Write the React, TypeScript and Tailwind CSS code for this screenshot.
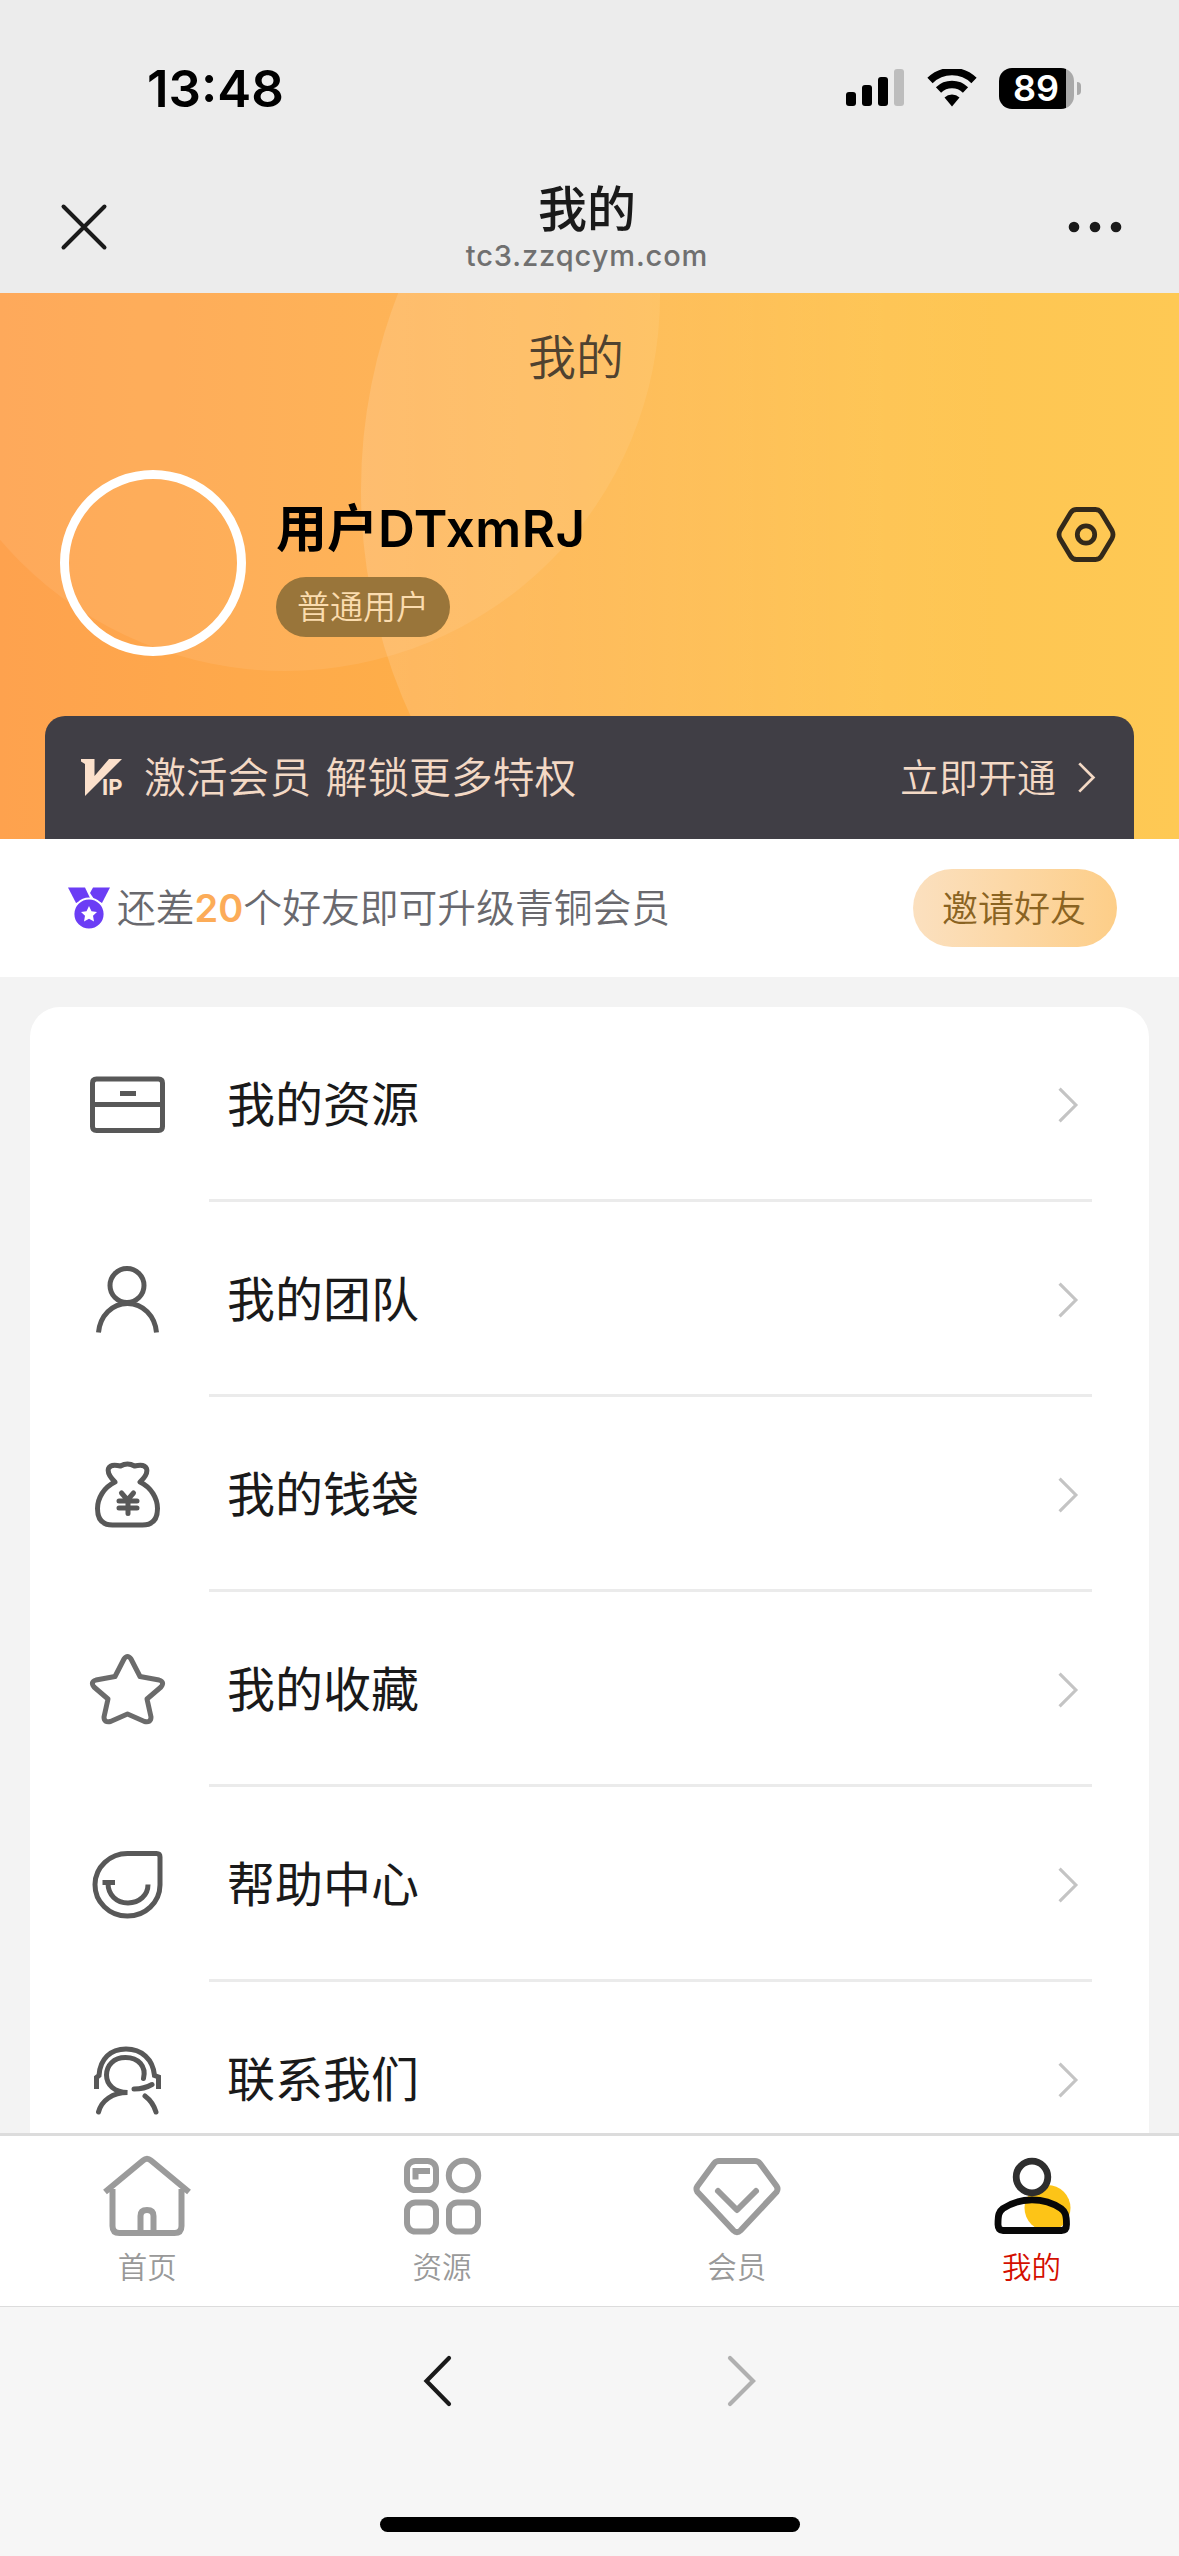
import React, { ReactNode, useState } from "react";

type IconProps = { className?: string };

const StatusBar = () => (
    <div className="flex h-[176px] items-center justify-between pl-[147px] pr-[98px]">
        <span className="font-['Inter'] text-[51px] font-semibold leading-none text-black">13:48</span>
        <div className="flex items-center">
            <svg className="mr-[23px] h-[38px] w-[58px]" viewBox="0 0 58 38">
                <rect x="0" y="23" width="10" height="14" rx="3" />
                <rect x="16" y="16" width="10" height="21" rx="3" />
                <rect x="32" y="8" width="10" height="29" rx="3" />
                <rect x="48" y="0" width="10" height="37" rx="3" fill="#bdbdbd" />
            </svg>
            <svg className="mr-[22px] h-[38px] w-[50px]" viewBox="0 0 50 38">
                <path d="M3 11.5a31.5 31.5 0 0 1 44 0" fill="none" stroke="#000" strokeWidth="7.5" />
                <path d="M11.5 21a19.5 19.5 0 0 1 27 0" fill="none" stroke="#000" strokeWidth="7.5" />
                <path d="M17.5 28.5a11 11 0 0 1 15 0L25 37.5Z" />
            </svg>
            <div className="flex h-[41px] w-[75px] items-center rounded-[13px] bg-[linear-gradient(90deg,#000_67px,#a9a9a9_67px)] pl-[14px]">
                <span className="font-['Inter'] text-[36px] font-semibold leading-none text-white">89</span>
            </div>
            <div className="ml-[3px] h-[13px] w-[4px] rounded-r-full bg-[#a9a9a9]" />
        </div>
    </div>
);

const BrowserHeader = () => (
    <div className="flex h-[117px] items-start justify-between pl-[60px] pr-[57px]">
        <svg className="mt-[27px] size-[48px]" viewBox="0 0 48 48" fill="none" stroke="#1a1a1a" strokeWidth="4" strokeLinecap="round">
            <path d="M3.5 3.5l41 41M44.5 3.5l-41 41" />
        </svg>
        <div className="flex flex-col items-center pr-[2px]">
            <h1 className="h-[66px] text-[49px] font-medium leading-[60px] text-[#1a1a1a]">我的</h1>
            <p className="font-['Inter'] text-[29px] font-[450] leading-[28px] tracking-[0.9px] text-[#707070]">tc3.zzqcym.com</p>
        </div>
        <svg className="mt-[44px] h-[14px] w-[54px]" viewBox="0 0 54 14" fill="#1a1a1a">
            <circle cx="6" cy="7" r="5.3" />
            <circle cx="27" cy="7" r="5.3" />
            <circle cx="48" cy="7" r="5.3" />
        </svg>
    </div>
);

// Decorative translucent circles behind the profile block
const HeroBackground = () => (
    <svg className="absolute inset-0 h-full w-full" viewBox="0 0 1179 546">
        <defs>
            <linearGradient id="base" x1="0" y1="0" x2="1" y2="0">
                <stop offset="0" stopColor="#fea24e" />
                <stop offset="0.35" stopColor="#feae49" />
                <stop offset="0.75" stopColor="#fec452" />
                <stop offset="1" stopColor="#fec954" />
            </linearGradient>
            <linearGradient id="right" gradientUnits="userSpaceOnUse" x1="361" y1="0" x2="1000" y2="0">
                <stop offset="0" stopColor="#fff" stopOpacity="0.14" />
                <stop offset="1" stopColor="#fff" stopOpacity="0" />
            </linearGradient>
        </defs>
        <rect width="1179" height="546" fill="url(#base)" />
        <circle cx="285" cy="3" r="375" fill="#fff" fillOpacity="0.08" />
        <circle cx="901" cy="197" r="540" fill="url(#right)" />
    </svg>
);

const Vip = () => (
    <div className="relative h-[40px] w-[44px]">
        <svg className="h-[40px] w-[44px]" viewBox="0 0 44 40" fill="#fbe0cb">
            <path d="M0 1h13.5v17L28 1h13L4 38V6L0 3.5Z" />
        </svg>
        <span className="absolute left-[21px] top-[18px] font-['Inter'] text-[22px] font-bold leading-[23px] text-[#fbe0cb]">IP</span>
    </div>
);

const Medal = () => (
    <svg className="h-[43px] w-[42px]" viewBox="0 0 42 43" fill="#6b3df5">
        <path d="M0 0.5h17L22 11 8 16Z" />
        <path d="M25 0.5h17L34 16 26 12l-4-6Z" />
        <circle cx="21" cy="27" r="15.5" stroke="#fff" strokeWidth="1.8" />
        <path d="M21 19l2.5 5.2 5.5.7-4 3.9 1 5.7-5-2.700-5 2.700 1-5.700-4-3.900 5.500-.7Z" fill="#fff" />
    </svg>
);

const Chevron = ({ className }: IconProps) => (
    <svg className={className} viewBox="0 0 20 34" fill="none" stroke="currentColor" strokeWidth="3">
        <path d="M1.5 1.5L17 17 1.5 32.5" />
    </svg>
);

const Hero = () => (
    <section className="relative h-[546px] overflow-hidden">
        <HeroBackground />
        <div className="relative flex h-full flex-col">
            <h2 className="h-[128px] pr-[27px] text-center text-[48px] font-[350] leading-[122px] text-[#4f4230]">我的</h2>
            <div className="mt-[49px] flex h-[186px] pl-[60px] pr-[63px]">
                <div className="size-[186px] rounded-full border-[9px] border-white" />
                <div className="ml-[30px] flex grow flex-col items-start pt-[24px]">
                    <p className="font-['Inter','Noto_Sans_CJK_SC'] text-[51px] font-semibold leading-[70px] text-black">
                        用户<span className="tracking-[0.5px]">DTxmRJ</span>
                    </p>
                    <span className="mt-[13px] h-[60px] rounded-full bg-[#99753a] px-[21px] text-[33px] font-[350] leading-[57px] text-[#fbdcae]">普通用户</span>
                </div>
                <svg className="mt-[35px] h-[58px] w-[60px]" viewBox="0 0 60 58" fill="none" stroke="#33291a" strokeWidth="4.8">
                    <path d="M20.5 4.5h19q4 0 6 3.5l10.5 17.5q2 4 0 8L45.5 51q-2 3.500-6 3.500h-19q-4 0-6-3.500L4 33.500q-2-4 0-8L14.500 8q2-3.500 6-3.500Z" />
                    <circle cx="30" cy="29.5" r="8.7" />
                </svg>
            </div>
            <div className="mx-[45px] mt-auto flex h-[123px] items-center rounded-t-[20px] bg-[#403e45] pl-[36px] pr-[37px] text-[#f3d9c5]">
                <Vip />
                <span className="ml-[19px] grow pb-[4px] text-[41.8px] font-[350] [word-spacing:5px]">激活会员 解锁更多特权</span>
                <span className="pb-[4px] text-[39px] font-[350]">立即开通</span>
                <Chevron className="ml-[21px] h-[31px] w-[20px]" />
            </div>
        </div>
    </section>
);

const UpgradeTip = () => (
    <section className="flex h-[138px] items-center bg-white pl-[68px] pr-[62px]">
        <Medal />
        <p className="ml-[7px] grow pb-[3px] text-[38.8px] font-[350] text-[#69696e]">
            还差<b className="font-['Inter'] text-[38px] font-semibold text-[#fcac58]">20</b>个好友即可升级青铜会员
        </p>
        <button className="h-[78px] w-[204px] rounded-full bg-linear-to-r from-[#fbe0bf] to-[#fdce88] pb-[5px] pr-[2px] text-[36px] font-[350] text-[#8a6322]">邀请好友</button>
    </section>
);

const MenuIcon = ({ children }: { children: ReactNode }) => (
    <svg className="h-[80px] w-[80px] shrink-0" viewBox="0 0 80 80" fill="none" stroke="#585858" strokeWidth="5">
        {children}
    </svg>
);

const menu = [
    {
        title: "我的资源",
        icon: <path d="M9.5 14h62q4 0 4 4v43.5q0 4-4 4h-62q-4 0-4-4V18q0-4 4-4ZM5.5 39.5h70M33 28.5h16" />,
    },
    {
        title: "我的团队",
        icon: (
            <>
                <circle cx="40" cy="25.5" r="17" />
                <path d="M11.5 72.5C13 56 25 43.5 40.5 43.5s27.5 12.5 29 29" />
            </>
        ),
    },
    {
        title: "我的钱袋",
        icon: (
            <>
                <path strokeLinejoin="round" d="M28 27C22.5 21.500 20.500 16.500 21.500 13.500q2-5 12-2.500 7-4 14 0 10-2.500 12 2.500c1 3-.5 8-6.500 13.500C64.500 32.500 70.500 43.500 70.500 53.500q0 16.500-15 16.500h-30q-15 0-15-16.500c0-10 6-21 17.500-26.500Z" />
                <path strokeLinecap="round" d="M34.5 38l6 7 6-7M32 46h18M32 53h18M41 46v12.500" />
            </>
        ),
    },
    {
        title: "我的收藏",
        icon: (
            <path strokeLinejoin="round" stroke="#6b6b6b" d="M37 9q3.500-5 7 0L53 26.500l19 3.500q6 2 2 7L60 49l4 18q0 6-6.500 4.500l-17-7.500-17 7.500q-6.500 1.500-6.500-4.500l4-18L7 37q-4-5 2-7L28 26.500Z" />
        ),
    },
    {
        title: "帮助中心",
        icon: (
            <>
                <path d="M41 8.500h28.500q3.500 0 3.500 3.500v28A32.500 31.300 0 1 1 41 8.500Z" />
                <path d="M15.500 37.500H28M21 38c0 12 8.500 20 20 20s20-8 20-18.500" />
            </>
        ),
    },
    {
        title: "联系我们",
        icon: (
            <>
                <path d="M9.500 49V37.500l2.500-2C13 19 23.500 9 39 9S66 19 67.500 35.500l4 1.500v12" />
                <path strokeLinecap="round" d="M56.500 38.500c3-12-5-21-18-21-12 0-19 8-19 17.500 0 10 8 17 21 17.500-15 0-26 8-29 19.500M47 49c8 0 12-1 18-4.500M58 56q8 6 11 16" />
            </>
        ),
    },
];

const Menu = () => (
    <section className="mx-[30px] mt-[30px] h-[1126px] overflow-hidden rounded-t-[30px] bg-white">
        {menu.map((item) => (
            <div key={item.title} className="flex h-[195px] items-center pl-[57px]">
                <MenuIcon>{item.icon}</MenuIcon>
                <div className="ml-[42px] mr-[57px] flex h-full grow items-center justify-between border-b-[3px] border-[#ebebeb] pl-[18px] pr-[13px] pt-[3px]">
                    <span className="pb-[8px] text-[48px] leading-none text-[#1a1a1a]">{item.title}</span>
                    <Chevron className="h-[36px] w-[21px] text-[#c4c4c4]" />
                </div>
            </div>
        ))}
    </section>
);

const tabs = [
    {
        title: "首页",
        icon: (
            <>
                <path strokeLinejoin="round" d="M3 38L41 6.500q4-3.500 8 0L87 38M10.500 35v37q0 7 7 7h55q7 0 7-7V35" />
                <path d="M38.500 79V62q0-6 6.500-6t6.500 6v17" />
            </>
        ),
    },
    {
        title: "资源",
        icon: (
            <>
                <rect x="10" y="7" width="29" height="29" rx="8.5" />
                <circle cx="66.5" cy="21.5" r="14.7" />
                <rect x="10" y="48.5" width="29" height="29" rx="8.5" />
                <rect x="52" y="48.5" width="29" height="29" rx="8.5" />
                <path d="M15.500 17H33M18.500 17v8.500" />
            </>
        ),
    },
    {
        title: "会员",
        icon: (
            <>
                <path strokeLinejoin="round" d="M27 7h36q3 0 5 2.500L84.500 32q2 3 0 6L48.500 76.500q-3.500 3.500-7 0L5.500 38q-2-3 0-6L22 9.500Q24 7 27 7Z" />
                <path strokeLinecap="round" strokeLinejoin="round" d="M26 37l19 19 19-19" />
            </>
        ),
    },
    {
        title: "我的",
        icon: (
            <>
                <circle cx="60.5" cy="54" r="23" fill="#fdc417" stroke="none" />
                <circle cx="45" cy="23" r="15.8" stroke="#2e2e2e" strokeWidth="6.8" fill="#fff" />
                <path strokeLinejoin="round" stroke="#080808" strokeWidth="6.8" d="M11 70.500c0-10 1-13 5-16 17-11.500 41-11.500 58 0 4 3 5.500 6 5.500 16q0 6-5 6H16q-5 0-5-6Z" />
            </>
        ),
    },
];

const TabBar = ({ active, onChange }: { active: number; onChange: (i: number) => void }) => (
    <nav className="grid h-[174px] grid-cols-4 border-b border-t-[3px] border-b-[#dcdcdc] border-t-[#dcdcdc] bg-white">
        {tabs.map((tab, i) => (
            <button key={tab.title} className="flex flex-col items-center pt-[18px]" onClick={() => onChange(i)}>
                <svg className="h-[84px] w-[90px]" viewBox="0 0 90 84" fill="none" stroke="#9b9b9b" strokeWidth="6">
                    {tab.icon}
                </svg>
                <span className={i === active ? "mt-[9px] text-[29.5px] font-[350] leading-[36px] text-[#d40f00]" : "mt-[9px] text-[29.5px] font-[350] leading-[36px] text-[#999]"}>
                    {tab.title}
                </span>
            </button>
        ))}
    </nav>
);

const BrowserFooter = () => (
    <footer className="flex h-[249px] flex-col items-center bg-[#f6f6f6]">
        <div className="mt-[47px] flex gap-[274px]">
            <svg className="h-[54px] w-[30px]" viewBox="0 0 30 54" fill="none" stroke="#1a1a1a" strokeWidth="4.2" strokeLinecap="round">
                <path d="M26 4L3.500 27 26 50" />
            </svg>
            <svg className="h-[54px] w-[30px]" viewBox="0 0 30 54" fill="none" stroke="#b0b0b0" strokeWidth="4.2" strokeLinecap="round">
                <path d="M3 4l23 23L3 50" />
            </svg>
        </div>
        <div className="mt-[109px] h-[15px] w-[420px] rounded-full bg-black" />
    </footer>
);

export default function App() {
    const [active, setActive] = useState(3);

    return (
        <div className="flex h-[2556px] w-[1179px] flex-col overflow-hidden bg-[#f3f3f3] font-['Noto_Sans_CJK_SC',sans-serif]">
            <header className="bg-[#ececec]">
                <StatusBar />
                <BrowserHeader />
            </header>
            <Hero />
            <UpgradeTip />
            <Menu />
            <TabBar active={active} onChange={setActive} />
            <BrowserFooter />
        </div>
    );
}
